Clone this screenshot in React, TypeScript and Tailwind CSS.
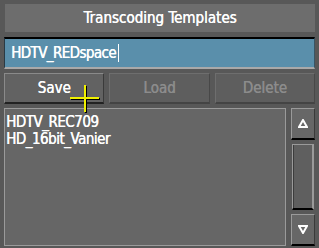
import React from "react";

export default function App() {
  const font = { fontFamily: '"DejaVu Sans Condensed", "DejaVu Sans", sans-serif' };
  const heavy = { textShadow: "0.4px 0 0 currentColor" };
  return (
    <div className="relative w-[319px] h-[248px] bg-[#585858] overflow-hidden [font-stretch:condensed]" style={font}>
      <div className="flex flex-col px-[4px] pt-[4px]">
        {/* Title */}
        <div className="ml-[1px] h-[28px] bg-[#6d6d6d] flex items-center justify-center text-white text-[15px]" style={heavy}>
          Transcoding Templates
        </div>
        {/* Input */}
        <div className="mt-[5px] h-[32px] bg-[#5a8fab] border-t-[2px] border-t-black border-l border-l-[#2a3a44] border-b-[2px] border-b-[#a9a9a9] border-r border-r-[#3a5565] flex items-center pl-[6px] text-white text-[15px] tracking-[-0.6px]" style={heavy}>
          <span>HDTV_REDspace</span>
          <span className="ml-[2px] w-[1px] h-[18px] bg-white"></span>
        </div>
        {/* Buttons */}
        <div className="mt-[4px] flex gap-[5px] h-[31px]">
          <div className="flex-1 bg-[#626262] border-t border-l border-t-[#8a8a8a] border-l-[#8a8a8a] border-b-[2px] border-b-[#222] border-r border-r-[#3a3a3a] flex items-center justify-center text-white text-[15px]" style={heavy}>
            Save
          </div>
          <div className="flex-1 bg-[#5e5e5e] border-t border-l border-t-[#6e6e6e] border-l-[#6e6e6e] border-b-[2px] border-b-[#444] border-r border-r-[#484848] flex items-center justify-center text-[#8c8c8c] text-[15px]" style={heavy}>
            Load
          </div>
          <div className="flex-1 bg-[#5e5e5e] border-t border-l border-t-[#6e6e6e] border-l-[#6e6e6e] border-b-[2px] border-b-[#444] border-r border-r-[#484848] flex items-center justify-center text-[#8c8c8c] text-[15px]" style={heavy}>
            Delete
          </div>
        </div>
        {/* List + scrollbar */}
        <div className="mt-[4px] flex h-[138px]">
          <div className="w-[282px] bg-[#666666] border border-[#9a9a9a] text-white text-[15px] leading-[17px] tracking-[-0.5px] pt-[5px] pl-[1px]" style={heavy}>
            <div>HDTV_REC709</div>
            <div>HD_16bit_Vanier</div>
          </div>
          <div className="ml-[5px] w-[24px] flex flex-col">
            <div className="h-[32px] bg-[#676767] border-t border-l border-t-[#9a9a9a] border-l-[#9a9a9a] border-b-[2px] border-b-black border-r border-r-[#3a3a3a] flex items-center justify-center">
              <svg width="10" height="9" viewBox="0 0 10 9">
                <polygon points="5,1 9,8 1,8" fill="none" stroke="white" strokeWidth="2" />
              </svg>
            </div>
            <div className="mt-[4px] flex-1 bg-[#5c5c5c] border-t border-l border-t-[#9a9a9a] border-l-[#9a9a9a] border-b-[2px] border-b-black border-r-[2px] border-r-[#9a9a9a] mb-[4px] mx-[1px]">
              <div className="h-full border-l border-[#3c3c3c] bg-[#5f5f5f]"></div>
            </div>
            <div className="h-[32px] bg-[#676767] border-t border-l border-t-[#9a9a9a] border-l-[#9a9a9a] border-b-[2px] border-b-black border-r border-r-[#3a3a3a] flex items-center justify-center">
              <svg width="10" height="9" viewBox="0 0 10 9">
                <polygon points="1,1 9,1 5,8" fill="none" stroke="white" strokeWidth="2" />
              </svg>
            </div>
          </div>
        </div>
      </div>
      {/* Cursor crosshair */}
      <svg className="absolute left-[70px] top-[85px]" width="30" height="30" viewBox="0 0 30 30">
        <line x1="16" y1="1" x2="16" y2="28" stroke="black" strokeWidth="2" />
        <line x1="1" y1="14" x2="30" y2="14" stroke="black" strokeWidth="2" />
        <line x1="15" y1="0" x2="15" y2="27" stroke="#f0f000" strokeWidth="2" />
        <line x1="0" y1="13" x2="29" y2="13" stroke="#f0f000" strokeWidth="2" />
      </svg>
    </div>
  );
}
